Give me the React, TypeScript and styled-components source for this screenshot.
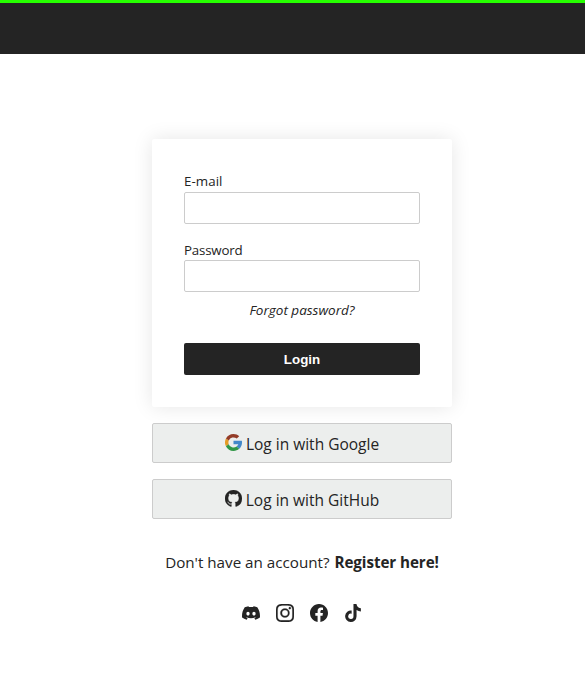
import React from "react";
import styled, { createGlobalStyle } from "styled-components";
import { BsDiscord, BsFacebook, BsGithub, BsInstagram } from "react-icons/bs";
import { FaTiktok } from "react-icons/fa6";

const GlobalStyle = createGlobalStyle`
  * { box-sizing: border-box; }
  body {
    margin: 0;
    background: #fff;
    color: #242424;
    font-family: "Open Sans", "Noto Sans", sans-serif;
  }
`;

const Header = styled.header`
  height: 54px;
  background: #242424;
  border-top: 3px solid #26ff00;
`;

const Main = styled.main`
  display: flex;
  flex-direction: column;
  width: 300px;
  margin: 85px 0 0 152px;
`;

const Card = styled.form`
  display: flex;
  flex-direction: column;
  height: 268px;
  padding: 32px;
  border-radius: 2px;
  background: #fff;
  box-shadow: 0 0 20px rgba(0, 0, 0, 0.1);
`;

const Field = styled.div<{ $height: number }>`
  display: flex;
  flex-direction: column;
  justify-content: flex-end;
  height: ${(p) => p.$height}px;
`;

const Label = styled.label<{ $tracking: number; $height: number }>`
  height: ${(p) => p.$height}px;
  font-size: 13.33px;
  line-height: 21px;
  letter-spacing: ${(p) => p.$tracking}px;
`;

const Input = styled.input`
  width: 100%;
  height: 32px;
  border: 1px solid #ccc;
  border-radius: 2px;
  background: #fff;
  outline: none;
`;

const Forgot = styled.a`
  align-self: center;
  margin-top: 8px;
  font-size: 13.5px;
  font-style: italic;
  line-height: 20px;
`;

const LoginButton = styled.button`
  height: 32px;
  margin-top: auto;
  border: 0;
  border-radius: 2px;
  background: #242424;
  color: #fff;
  font: bold 13.33px "Liberation Sans", Arial, sans-serif;
`;

const ProviderButton = styled.button`
  display: flex;
  align-items: center;
  justify-content: center;
  gap: 4px;
  height: 40px;
  margin-top: 16px;
  padding: 0;
  border: 1px solid #ccc;
  border-radius: 2px;
  background: #eceeed;
  color: #242424;
  font: 400 15.5px "Open Sans", sans-serif;
  svg { margin-bottom: 2px; }
`;

const ProviderText = styled.span`
  line-height: 22px;
  padding-top: 1px;
`;

const Register = styled.p`
  margin: 31px 0 0;
  font-size: 15.2px;
  line-height: 24px;
  text-align: center;
  white-space: nowrap;
  b {
    margin-left: 1px;
    letter-spacing: -0.07px;
  }
`;

const Socials = styled.nav`
  display: flex;
  justify-content: center;
  gap: 16px;
  margin-top: 30px;
`;

const GoogleLogo = () => (
  <svg width="17" height="17" viewBox="4 4 40 40">
    <path fill="#4388c9" d="M43.6 20H24v8h11.3c-.8 2.2-2.2 4.2-4.1 5.6l6.2 5.2C37 39.2 44 34 44 24c0-1.300-.1-2.700-.4-4z" />
    <path fill="#e49b25" d="m6.300 14.700 6.600 4.800C12.300 21 12 22.500 12 24c0 1.400.2 2.700.7 3.900l-6.500 5.100A20 20 0 0 1 6.300 14.700z" />
    <path fill="#943c28" d="M6.300 14.700A20 20 0 0 1 24 4c5.300 0 9.900 2 13.400 5.100l-5.700 5.700A12 12 0 0 0 12.900 19.500z" />
    <path fill="#309746" d="M24 44c5.200 0 9.900-2 13.400-5.200l-6.200-5.200A12 12 0 0 1 12.700 27.900L6.200 33A20 20 0 0 0 24 44z" />
  </svg>
);

export default function App() {
  return (
    <>
      <GlobalStyle />
      <Header />
      <Main>
        <Card>
          <Field $height={53}>
            <Label $tracking={0.05} $height={21} htmlFor="email">E-mail</Label>
            <Input id="email" type="email" />
          </Field>
          <Field $height={68}>
            <Label $tracking={-0.2} $height={20} htmlFor="password">Password</Label>
            <Input id="password" type="password" />
          </Field>
          <Forgot>Forgot password?</Forgot>
          <LoginButton type="button">Login</LoginButton>
        </Card>
        <ProviderButton type="button">
          <GoogleLogo />
          <ProviderText>Log in with Google</ProviderText>
        </ProviderButton>
        <ProviderButton type="button">
          <BsGithub size={17} stroke="currentColor" strokeWidth={0.3} />
          <ProviderText>Log in with GitHub</ProviderText>
        </ProviderButton>
        <Register>
          Don't have an account? <b>Register here!</b>
        </Register>
        <Socials>
          <BsDiscord size={18} />
          <BsInstagram size={18} stroke="currentColor" strokeWidth={0.2} />
          <BsFacebook size={18} />
          <FaTiktok size={18} />
        </Socials>
      </Main>
    </>
  );
}
